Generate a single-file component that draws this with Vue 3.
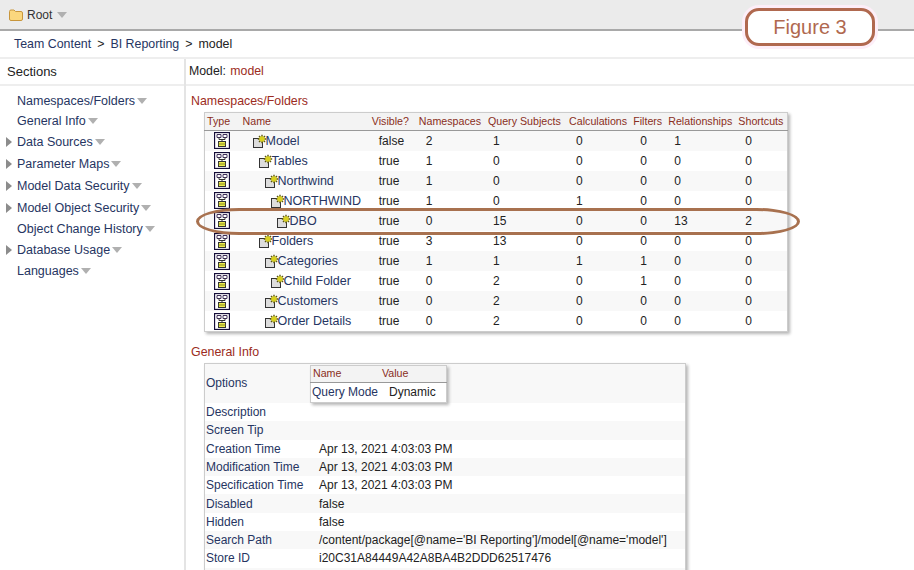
<template>
  <div class="page">
    <div class="topbar">
      <svg class="folder" width="14" height="12" viewBox="0 0 14 12">
        <path d="M0.5 2.5 Q0.5 1 2 1 L5 1 L6.5 2.5 L12 2.5 Q13.5 2.5 13.5 4 L13.5 10 Q13.5 11.5 12 11.5 L2 11.5 Q0.5 11.5 0.5 10 Z" fill="#fbd77e" stroke="#c8963c" />
      </svg>
      <span class="root">Root</span>
      <span class="caret"></span>
    </div>
    <div class="crumbs">
      <span class="crumb">Team Content</span>
      <span class="sep">&gt;</span>
      <span class="crumb">BI Reporting</span>
      <span class="sep">&gt;</span>
      <span>model</span>
    </div>
    <div class="body">
      <aside class="sidebar">
        <div class="side-head">Sections</div>
        <div class="side-list">
          <div v-for="s in sections" :key="s.name" class="side-item" :class="{ tall: s.arrow }">
            <span v-if="s.arrow" class="twisty"></span>
            <span class="side-name">{{ s.name }}</span>
            <span class="caret"></span>
          </div>
        </div>
      </aside>
      <main class="main">
        <div class="main-head">Model: <span class="model-name">model</span></div>

        <h3 class="sec-title">Namespaces/Folders</h3>
        <table class="grid ns-table">
          <colgroup>
            <col v-for="w in colWidths" :key="w.id" :style="{ width: w.px + 'px' }" />
          </colgroup>
          <thead>
            <tr>
              <th v-for="h in headers" :key="h">{{ h }}</th>
            </tr>
          </thead>
          <tbody>
            <tr v-for="row in rows" :key="row.name">
              <td class="type-cell">
                <svg width="16" height="17" viewBox="0 0 16 17">
                  <rect x="0.5" y="0.5" width="15" height="16" fill="#fff" stroke="#140c38" stroke-width="1.3" />
                  <path d="M3 2.5h4v3h-4z M9 2.5h4v3h-4z" fill="#fff" stroke="#40305a" />
                  <path d="M5 5.5v2h6v-2 M8 7.5v1.5" fill="none" stroke="#333" />
                  <rect x="4.5" y="9.5" width="7" height="5" fill="#ecec4c" stroke="#333" />
                  <path d="M4.5 12h7" stroke="#8a8a20" />
                </svg>
              </td>
              <td class="name-cell" :style="{ paddingLeft: row.indent + 'px' }">
                <svg class="ns-icon" width="14" height="14" viewBox="0 0 14 14">
                  <rect x="0.5" y="4.5" width="9" height="9" fill="#ddd" stroke="#333" />
                  <path d="M9 0.8v8.4 M4.8 5h8.4 M6 2l6 6 M12 2l-6 6" stroke="#5c5612" stroke-width="1.4" />
                  <circle cx="9" cy="5" r="2.8" fill="#d8d020" />
                </svg><span class="link">{{ row.name }}</span>
              </td>
              <td class="num">{{ row.visible }}</td>
              <td v-for="(n, i) in row.counts" :key="i" class="num">{{ n }}</td>
            </tr>
          </tbody>
        </table>

        <h3 class="sec-title info-title">General Info</h3>
        <table class="grid info-table">
          <tbody>
            <tr class="options-row">
              <td class="label">Options</td>
              <td class="options-cell">
                <table class="grid nested">
                  <thead>
                    <tr><th class="n1">Name</th><th class="n2">Value</th></tr>
                  </thead>
                  <tbody>
                    <tr><td class="label">Query Mode</td><td class="dyn">Dynamic</td></tr>
                  </tbody>
                </table>
              </td>
            </tr>
            <tr v-for="item in info" :key="item.label">
              <td class="label">{{ item.label }}</td>
              <td class="val">{{ item.value }}</td>
            </tr>
          </tbody>
        </table>
      </main>
    </div>

    <div class="figure">Figure 3</div>
    <div class="oval"></div>
  </div>
</template>

<script setup>
const sections = [
  { name: 'Namespaces/Folders', arrow: false },
  { name: 'General Info', arrow: false },
  { name: 'Data Sources', arrow: true },
  { name: 'Parameter Maps', arrow: true },
  { name: 'Model Data Security', arrow: true },
  { name: 'Model Object Security', arrow: true },
  { name: 'Object Change History', arrow: false },
  { name: 'Database Usage', arrow: true },
  { name: 'Languages', arrow: false }
]

const headers = ['Type', 'Name', 'Visible?', 'Namespaces', 'Query Subjects', 'Calculations', 'Filters', 'Relationships', 'Shortcuts']
const colWidths = [36, 129, 47, 69, 81, 64, 35, 70, 51].map((px, id) => ({ id, px }))

const rows = [
  { name: 'Model', indent: 12, visible: 'false', counts: [2, 1, 0, 0, 1, 0] },
  { name: 'Tables', indent: 18, visible: 'true', counts: [1, 0, 0, 0, 0, 0] },
  { name: 'Northwind', indent: 24, visible: 'true', counts: [1, 0, 0, 0, 0, 0] },
  { name: 'NORTHWIND', indent: 30, visible: 'true', counts: [1, 0, 1, 0, 0, 0] },
  { name: 'DBO', indent: 36, visible: 'true', counts: [0, 15, 0, 0, 13, 2] },
  { name: 'Folders', indent: 18, visible: 'true', counts: [3, 13, 0, 0, 0, 0] },
  { name: 'Categories', indent: 24, visible: 'true', counts: [1, 1, 1, 1, 0, 0] },
  { name: 'Child Folder', indent: 30, visible: 'true', counts: [0, 2, 0, 1, 0, 0] },
  { name: 'Customers', indent: 24, visible: 'true', counts: [0, 2, 0, 0, 0, 0] },
  { name: 'Order Details', indent: 24, visible: 'true', counts: [0, 2, 0, 0, 0, 0] }
]

// last row is blank, the table runs on below the fold
const info = [
  { label: 'Description', value: '' },
  { label: 'Screen Tip', value: '' },
  { label: 'Creation Time', value: 'Apr 13, 2021 4:03:03 PM' },
  { label: 'Modification Time', value: 'Apr 13, 2021 4:03:03 PM' },
  { label: 'Specification Time', value: 'Apr 13, 2021 4:03:03 PM' },
  { label: 'Disabled', value: 'false' },
  { label: 'Hidden', value: 'false' },
  { label: 'Search Path', value: "/content/package[@name='BI Reporting']/model[@name='model']" },
  { label: 'Store ID', value: 'i20C31A84449A42A8BA4B2DDD62517476' },
  { label: '', value: '' }
]
</script>

<style scoped>
.page {
  position: relative;
  width: 914px;
  height: 570px;
  overflow: hidden;
  background: #fff;
  font-family: "Liberation Sans", Arial, sans-serif;
  font-size: 12px;
  color: #222;
}

.topbar {
  display: flex;
  align-items: center;
  height: 29px;
  padding-left: 9px;
  background: #ebebeb;
  border-bottom: 2px solid #a9a9a9;
}

.folder {
  margin-right: 4px;
}

.root {
  color: #333;
  margin-right: 5px;
}

.caret {
  display: inline-block;
  width: 0;
  height: 0;
  border-left: 5.5px solid transparent;
  border-right: 5.5px solid transparent;
  border-top: 6px solid #b0b0b0;
}

.crumbs {
  display: flex;
  align-items: center;
  height: 26px;
  padding-left: 14px;
  border-bottom: 2px solid #eee;
  font-size: 12.4px;
}

.crumb {
  color: #263562;
}

.sep {
  margin: 0 6px;
}

.body {
  display: flex;
}

.sidebar {
  width: 184px;
  flex-shrink: 0;
  border-right: 2px solid #e4e4e4;
}

.side-head {
  height: 25px;
  line-height: 25px;
  padding-left: 7px;
  font-size: 13px;
  border-bottom: 2px solid #eee;
}

.side-list {
  padding: 5px 0 0 6px;
}

.side-item {
  display: flex;
  align-items: center;
  height: 20px;
  padding-left: 11px;
  color: #263562;
  font-size: 12.5px;
}

.side-item.tall {
  height: 22px;
  padding-left: 0;
}

.side-name {
  margin-right: 2px;
}

.twisty {
  width: 0;
  height: 0;
  margin-right: 5px;
  border-top: 5px solid transparent;
  border-bottom: 5px solid transparent;
  border-left: 6px solid #8c8c8c;
}

.main {
  flex: 1;
  min-width: 0;
}

.main-head {
  height: 25px;
  line-height: 25px;
  padding-left: 3px;
  border-bottom: 2px solid #eee;
  font-size: 12.3px;
}

.model-name {
  color: #9c2c22;
  margin-left: 1px;
}

.sec-title {
  margin: 0;
  padding: 7px 0 0 5px;
  height: 19px;
  line-height: 17px;
  font-size: 12.4px;
  font-weight: normal;
  color: #9c2c22;
}

.info-title {
  padding-top: 12px;
  height: 19px;
}

.grid {
  border-collapse: collapse;
  background: #fff;
  box-shadow: 2px 2px 3px #b5b5b5;
}

.grid th {
  padding: 0 0 2px 2px;
  text-align: left;
  font-weight: normal;
  font-size: 10.67px;
  color: #8a2e22;
  white-space: nowrap;
  background: #f3f3f3;
  border-bottom: 1px solid #999;
}

.ns-table {
  table-layout: fixed;
  width: 584px;
  margin-left: 18px;
  border: 1px solid #ccc;
}

.ns-table thead tr {
  height: 18px;
}

.ns-table tbody tr {
  height: 20.1px;
}

.ns-table tbody tr:nth-child(odd) {
  background: #f8f8f8;
}

.ns-table td {
  padding: 0 0 0 2px;
  white-space: nowrap;
}

.ns-table td.num {
  padding-left: 9px;
}

.ns-table td.num:nth-child(5) {
  padding-left: 7px;
}

.ns-table td.num:nth-child(8) {
  padding-left: 8px;
}

.ns-table td.type-cell {
  padding: 0 2px 0 0;
  text-align: center;
  line-height: 0;
}

.ns-table td.name-cell {
  font-size: 12.5px;
}

.ns-icon {
  vertical-align: -3px;
  margin-right: -1px;
}

.link,
.label {
  color: #263562;
}

.info-table {
  width: 482px;
  margin-left: 18px;
  border: 1px solid #ccc;
}

.info-table > tbody > tr {
  height: 18.3px;
}

.info-table > tbody > tr:nth-child(odd) {
  background: #f8f8f8;
}

.info-table > tbody > tr.options-row {
  height: 39px;
  background: #f8f8f8;
}

.info-table > tbody > tr > td {
  padding: 0 0 0 1px;
  white-space: nowrap;
}

.info-table > tbody > tr > td.label {
  width: 103px;
}

.info-table > tbody > tr > td.options-cell {
  vertical-align: top;
  padding-top: 1px;
}

.info-table .val {
  padding-left: 10px;
}

.nested {
  table-layout: fixed;
  border: 1px solid #ccc;
  width: 137px;
}

.nested th {
  height: 13px;
  padding-top: 1px;
  background: #f3f3f3;
}

.nested td {
  height: 17px;
  padding-left: 1px;
}

.nested .n1 {
  width: 67px;
}

.nested .dyn {
  padding-left: 9px;
}

.figure {
  position: absolute;
  left: 745px;
  top: 8px;
  width: 130px;
  height: 38px;
  box-sizing: border-box;
  border: 3px solid #b0694f;
  border-radius: 14px;
  background: #fff;
  box-shadow: 0 0 0 3px #fdeef8;
  color: #b0694f;
  font-size: 20px;
  line-height: 32px;
  text-align: center;
}

.oval {
  position: absolute;
  left: 196px;
  top: 208px;
  width: 604px;
  height: 27px;
  box-sizing: border-box;
  border: 3px solid #a8714f;
  border-radius: 45px / 14px;
}
</style>

<style>
html,
body {
  margin: 0;
  background: #fff;
}
</style>
